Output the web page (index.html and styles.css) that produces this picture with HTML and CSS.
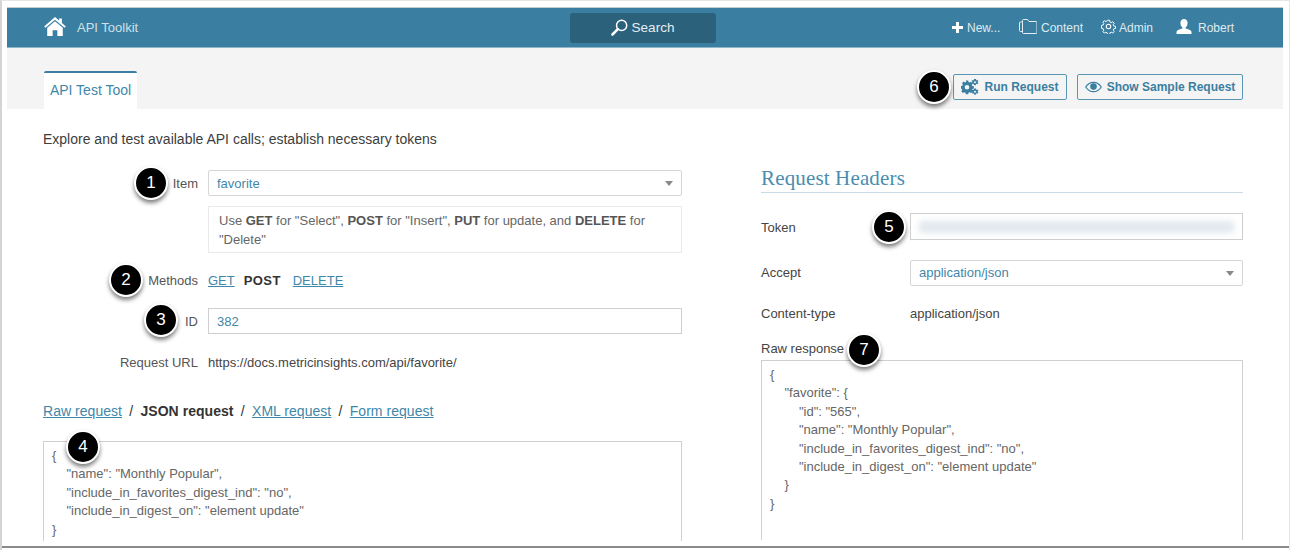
FILE: index.html
```html
<!DOCTYPE html>
<html lang="en">
<head>
<meta charset="utf-8">
<title>API Toolkit</title>
<link rel="stylesheet" href="styles.css">
</head>
<body>
<div class="frame">
  <div class="app">
    <header class="topbar">
      <div class="brand">
        <svg class="ico-home" viewBox="0 0 24 21"><path fill="#fff" d="M12 0 L16.6 4 V1.6 H19.6 V6.6 L24 10.5 L22.6 12 L12 3 L1.4 12 L0 10.5 Z M12 4.8 L20.6 12 V21 H14.6 V14.6 H9.4 V21 H3.4 V12 Z"/></svg>
        <span>API Toolkit</span>
      </div>
      <div class="search">
        <svg class="ico-search" viewBox="0 0 16 16"><circle cx="10" cy="6" r="4.8" fill="none" stroke="#fff" stroke-width="1.4"/><path d="M6.4 9.6 L1.4 14.6" stroke="#fff" stroke-width="2.4" stroke-linecap="round"/></svg>
        <span>Search</span>
      </div>
      <nav class="topnav">
        <span class="nav-item nav-new"><svg class="ico-plus" viewBox="0 0 12 12"><path fill="#fff" d="M4.4 0h3.2v4.4H12v3.2H7.6V12H4.4V7.6H0V4.4h4.4z"/></svg>New...</span>
        <span class="nav-item nav-content"><svg class="ico-folder" viewBox="0 0 18 15"><path fill="none" stroke="#e4eef3" stroke-width="1" d="M3.5 3.5V1.5a1 1 0 0 1 1-1h4l1.500 2h7a1 1 0 0 1 1 1V13.500a1 1 0 0 1-1 1H4.500a1 1 0 0 1-1-1V3.500M3.500 3H1.500a1 1 0 0 0-1 1V11.500a1 1 0 0 0 1 1H3.500"/></svg>Content</span>
        <span class="nav-item nav-admin"><svg class="ico-gear" viewBox="0 0 16 16"><circle cx="8" cy="8" r="2.400" fill="none" stroke="#fff" stroke-width="1.100"/><path fill="none" stroke="#fff" stroke-width="1.100" stroke-linejoin="round" d="M6.800.8h2.400l.4 2 1.500.7 1.800-1 1.600 1.700-1.100 1.700.6 1.500 2 .4v2.400l-2 .4-.6 1.500 1.100 1.700-1.600 1.700-1.800-1-1.500.7-.4 2H6.800l-.4-2-1.500-.7-1.800 1-1.600-1.700 1.100-1.700-.6-1.500-2-.4V6.600l2-.4.6-1.500L1.500 3l1.600-1.700 1.800 1 1.500-.7z" transform="translate(.6 .6) scale(.93)"/></svg>Admin</span>
        <span class="nav-item nav-user"><svg class="ico-user" viewBox="0 0 16 15"><path fill="#fff" d="M8 0c2.200 0 3.600 1.700 3.600 4 0 2-1 3.700-2 4.400v1.100c2.400.8 5.400 1.500 5.900 3.200V15H.5v-2.300c.5-1.700 3.500-2.400 5.900-3.200V8.400c-1-.7-2-2.400-2-4.400C4.400 1.700 5.800 0 8 0z"/></svg>Robert</span>
      </nav>
    </header>

    <div class="subbar">
      <div class="tab">API Test Tool</div>
      <div class="actions">
        <button class="btn btn-run" type="button"><svg class="ico-gears" viewBox="0 0 18 16"><g fill="#3a7fa2"><path fill-rule="evenodd" d="M5 3h2.400l.3 1.600 1.200.5 1.300-.9 1.700 1.700-.9 1.300.5 1.200 1.600.3v2.400l-1.600.3-.5 1.200.9 1.300-1.700 1.700-1.300-.9-1.200.5-.3 1.600H5l-.3-1.600-1.200-.5-1.300.9L.5 13.900l.9-1.300-.5-1.200L0 11V8.600l1.600-.3.500-1.200-.9-1.300 1.700-1.700 1.300.9 1.200-.5zM6.200 7.500a2.300 2.300 0 1 0 0 4.600 2.300 2.300 0 0 0 0-4.600z" transform="translate(-.2 -1.500)"/><path fill-rule="evenodd" d="M14 0l1 .1.200 1 .7.400.9-.4.600.9-.7.700v.8l.7.700-.6.900-.9-.4-.7.400-.2 1-1 .1-1-.1-.2-1-.7-.4-.9.4-.6-.9.700-.7v-.8l-.7-.7.6-.9.900.4.700-.4.200-1zM14 2.200a1 1 0 1 0 0 2 1 1 0 0 0 0-2z"/><path fill-rule="evenodd" d="M14 9.500l1 .1.200 1 .7.400.9-.4.600.9-.7.700v.8l.7.700-.6.900-.9-.4-.7.400-.2 1-1 .1-1-.1-.2-1-.7-.4-.9.4-.6-.9.700-.7v-.8l-.7-.7.6-.9.900.4.700-.4.200-1zM14 11.700a1 1 0 1 0 0 2 1 1 0 0 0 0-2z"/></g></svg>Run Request</button>
        <button class="btn btn-sample" type="button"><svg class="ico-eye" viewBox="0 0 18 12"><path fill="none" stroke="#3a7fa2" stroke-width="1.300" d="M.8 6C2.800 2.800 5.600 1 9 1s6.200 1.800 8.200 5C15.200 9.200 12.400 11 9 11S2.800 9.200.8 6z"/><circle cx="9" cy="5.600" r="3.500" fill="#3a7fa2"/></svg>Show Sample Request</button>
      </div>
    </div>

    <main class="main">
      <section class="col-left">
        <p class="intro">Explore and test available API calls; establish necessary tokens</p>
        <div class="row row-item">
          <label class="label">Item</label>
          <div class="select"><span>favorite</span><i class="caret"></i></div>
        </div>
        <div class="row row-note">
          <span class="label"></span>
          <div class="note">Use <b>GET</b> for "Select", <b>POST</b> for "Insert", <b>PUT</b> for update, and <b>DELETE</b> for "Delete"</div>
        </div>
        <div class="row row-methods">
          <span class="label">Methods</span>
          <div class="methods"><a href="#">GET</a><b>POST</b><a href="#">DELETE</a></div>
        </div>
        <div class="row row-id">
          <label class="label">ID</label>
          <div class="input">382</div>
        </div>
        <div class="row row-url">
          <span class="label">Request URL</span>
          <span class="value">https://docs.metricinsights.com/api/favorite/</span>
        </div>
        <div class="req-tabs"><a href="#">Raw request</a><span class="sep">/</span><b>JSON request</b><span class="sep">/</span><a href="#">XML request</a><span class="sep">/</span><a href="#">Form request</a></div>
        <pre class="code code-left">{
    "name": "Monthly Popular",
    "include_in_favorites_digest_ind": "no",
    "include_in_digest_on": "element update"
}</pre>
      </section>

      <section class="col-right">
        <h2 class="heading">Request Headers</h2>
        <div class="rrow rrow-token">
          <span class="rlabel">Token</span>
          <div class="input token"><div class="blurred"></div></div>
        </div>
        <div class="rrow rrow-accept">
          <span class="rlabel">Accept</span>
          <div class="select"><span>application/json</span><i class="caret"></i></div>
        </div>
        <div class="rrow rrow-type">
          <span class="rlabel">Content-type</span>
          <span class="value">application/json</span>
        </div>
        <div class="raw-label">Raw response</div>
        <pre class="code code-right">{
    "favorite": {
        "id": "565",
        "name": "Monthly Popular",
        "include_in_favorites_digest_ind": "no",
        "include_in_digest_on": "element update"
    }
}</pre>
      </section>
    </main>
  </div>

  <span class="badge b1">1</span>
  <span class="badge b2">2</span>
  <span class="badge b3">3</span>
  <span class="badge b4">4</span>
  <span class="badge b5">5</span>
  <span class="badge b6">6</span>
  <span class="badge b7">7</span>
</div>
</body>
</html>
```

FILE: styles.css
```css
* { box-sizing: border-box; }
html, body { margin: 0; padding: 0; background: #fff; }
body { font-family: "Liberation Sans", Arial, sans-serif; font-size: 13px; color: #444; }

.frame {
  position: relative;
  width: 1290px;
  height: 550px;
  padding: 6px 6px 3px 5px;
  background: #fff;
  border-left: 2px solid #d4d4d4;
  border-top: 1px solid #e6e6e6;
  border-right: 1px solid #e6e6e6;
  overflow: hidden;
}
.frame::after {
  content: "";
  position: absolute;
  left: 0; right: 0; bottom: 2px;
  height: 2px;
  background: #8a8a8a;
}
.app { height: 534px; overflow: hidden; border-top: 1px solid #c4ccd0; }

/* top bar */
.topbar {
  display: flex;
  align-items: center;
  height: 40px;
  background: #3a7fa2;
  color: #dfeaf0;
  padding-left: 37px;
  border-bottom: 1px solid #8fb6c9;
  position: relative;
}
.brand { display: flex; align-items: center; width: 526px; font-size: 13px; color: #cfe0e8; }
.ico-home { width: 22px; height: 19px; margin-right: 11px; margin-top: -3px; }
.search {
  display: flex; align-items: center; justify-content: center;
  width: 146px; height: 30px;
  background: #2c617c;
  border-radius: 3px;
  color: #e4eef3;
  font-size: 13.500px;
}
.ico-search { width: 17px; height: 17px; margin-right: 4px; margin-left: -1px; }
.topnav { display: flex; align-items: center; margin-left: 236px; font-size: 12px; color: #dfeaf0; }
.nav-item { display: flex; align-items: center; }
.nav-new { width: 67px; }
.nav-content { width: 82px; }
.nav-admin { width: 75px; }
.ico-plus { width: 11px; height: 11px; margin-right: 4px; }
.ico-folder { width: 18px; height: 15px; margin-right: 4px; margin-top: -3px; }
.ico-gear { width: 15px; height: 15px; margin-right: 3px; margin-top: -2px; }
.ico-user { width: 16px; height: 15px; margin-right: 6px; margin-top: -3px; }

/* sub bar */
.subbar {
  display: flex;
  justify-content: space-between;
  height: 61px;
  background: #f4f4f4;
  padding-left: 37px;
  padding-right: 40px;
}
.tab {
  align-self: flex-end;
  width: 93px;
  height: 39px;
  margin-bottom: -1px;
  padding-top: 9px;
  text-align: center;
  background: #fff;
  border-top: 2px solid #3a7fa2;
  border-radius: 2px 2px 0 0;
  color: #3f87a9;
  font-size: 14px;
}
.actions { display: flex; gap: 10px; padding-top: 26px; }
.btn {
  display: flex; align-items: center; justify-content: center;
  height: 26px;
  background: #f4f4f4;
  border: 1px solid #5a97b5;
  border-radius: 2px;
  color: #3a7fa2;
  font: bold 12px "Liberation Sans", Arial, sans-serif;
  padding: 0;
}
.btn-run { width: 114px; }
.btn-sample { width: 166px; }
.ico-gears { width: 18px; height: 16px; margin-right: 5px; }
.ico-eye { width: 17px; height: 12px; margin-right: 5px; }

/* main */
.main { display: flex; padding-left: 36px; background: #fff; position: relative; height: 433px; overflow: hidden; }
.col-left { width: 639px; flex: none; }
.col-right { width: 482px; flex: none; margin-left: 79px; }

.intro { margin: 22px 0 0; font-size: 14px; line-height: 16px; color: #3d3d3d; }

.row { display: flex; align-items: center; }
.label { width: 155px; flex: none; text-align: right; margin-right: 10px; color: #555; }
.row-item { margin-top: 23px; }
.row-note { margin-top: 10px; }
.row-methods { margin-top: 16px; height: 22px; }
.row-id { margin-top: 17px; }
.row-url { margin-top: 19px; height: 18px; }
.value { color: #444; font-size: 13px; }

.select, .input {
  flex: 1;
  display: flex; align-items: center; justify-content: space-between;
  height: 26px;
  padding: 0 8px;
  border: 1px solid #d6d6d6;
  border-radius: 2px;
  color: #3f87a9;
  font-size: 13px;
  background: #fff;
}
.input { border-color: #cfcfcf; border-radius: 0; }
.caret {
  width: 0; height: 0;
  border-left: 4.500px solid transparent;
  border-right: 4.500px solid transparent;
  border-top: 5px solid #888;
}
.note {
  flex: 1;
  height: 47px;
  padding: 4px 10px;
  line-height: 19px;
  border: 1px solid #eaeaea;
  color: #666;
}
.note b { color: #555; }
.methods { display: flex; font-size: 13px; }
.methods a { color: #3f87a9; }
.methods b { margin: 0 12px 0 9px; color: #333; letter-spacing: .4px; }

.req-tabs { margin-top: 31px; height: 18px; font-size: 14px; line-height: 18px; color: #333; letter-spacing: .04px; }
.req-tabs a { color: #3f87a9; }
.req-tabs .sep { margin: 0 7.250px; }

.code {
  margin: 0;
  font: 13px/18.400px "Liberation Sans", Arial, sans-serif;
  color: #666;
  border: 1px solid #d0d0d0;
  border-bottom: 0;
  white-space: pre;
  padding: 0 8px;
}
.code-left { margin-top: 21px; height: 100px; padding-top: 5px; }
.code-right { height: 180px; padding-top: 5px; }

/* right */
.heading {
  margin: 58px 0 0;
  height: 26px;
  padding-bottom: 2px;
  border-bottom: 1px solid #c8dbe6;
  font: normal 21px/22px "Liberation Serif", serif;
  letter-spacing: .15px;
  color: #4a8db0;
}
.rrow { display: flex; align-items: center; }
.rlabel { width: 149px; flex: none; color: #444; }
.rrow-token { margin-top: 20px; }
.rrow-token .rlabel { padding-top: 1px; }
.rrow-accept { margin-top: 20px; }
.rrow-accept .rlabel, .rrow-accept .select span { margin-top: -2px; }
.rrow-type { margin-top: 18px; height: 18px; }
.rrow .token { height: 27px; overflow: hidden; }
.blurred {
  width: 100%; height: 12px;
  background: #e2e8ed;
  filter: blur(3px);
}
.raw-label { margin-top: 19px; height: 19px; color: #444; }

/* badges */
.badge {
  position: absolute;
  width: 34px; height: 34px;
  display: flex; align-items: center; justify-content: center;
  background: #000;
  color: #fff;
  border: 2px solid #fff;
  border-radius: 50%;
  font: 17px "Liberation Sans", Arial, sans-serif;
  box-shadow: 0 3px 4px rgba(0,0,0,.5);
}
.b1 { left: 132px; top: 165px; }
.b2 { left: 107px; top: 262px; }
.b3 { left: 142px; top: 302px; }
.b4 { left: 64px;  top: 429px; }
.b5 { left: 870px; top: 209px; }
.b6 { left: 915px; top: 69px; }
.b7 { left: 845px; top: 332px; }
```
